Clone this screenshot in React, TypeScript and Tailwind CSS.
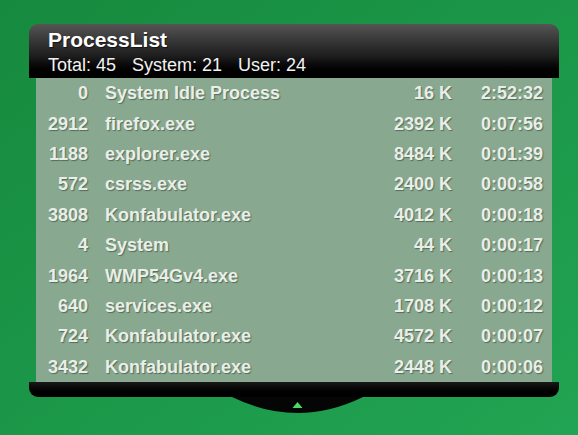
const processes = [
  { pid: "0", name: "System Idle Process", mem: "16 K", time: "2:52:32" },
  { pid: "2912", name: "firefox.exe", mem: "2392 K", time: "0:07:56" },
  { pid: "1188", name: "explorer.exe", mem: "8484 K", time: "0:01:39" },
  { pid: "572", name: "csrss.exe", mem: "2400 K", time: "0:00:58" },
  { pid: "3808", name: "Konfabulator.exe", mem: "4012 K", time: "0:00:18" },
  { pid: "4", name: "System", mem: "44 K", time: "0:00:17" },
  { pid: "1964", name: "WMP54Gv4.exe", mem: "3716 K", time: "0:00:13" },
  { pid: "640", name: "services.exe", mem: "1708 K", time: "0:00:12" },
  { pid: "724", name: "Konfabulator.exe", mem: "4572 K", time: "0:00:07" },
  { pid: "3432", name: "Konfabulator.exe", mem: "2448 K", time: "0:00:06" },
];

export default function App() {
  return (
    <div className="h-[435px] w-[578px] overflow-hidden bg-linear-to-br from-[#168a3e] to-[#21a453] pl-[29px] pt-[24px] font-['Liberation_Sans',Arial,sans-serif]">
      <div className="w-[530px]">
        {/* header */}
        <div className="h-[54px] rounded-t-[9px] bg-linear-to-b from-[#555555] via-[#1d1d1d] via-60% to-black pl-[19px] pt-[4px] text-white">
          <div className="text-[21px] font-bold leading-[24px] [text-shadow:1px_1px_1px_rgba(0,0,0,0.6)]">
            ProcessList
          </div>
          <div className="mt-[3px] flex text-[18px] leading-[20px] text-[#f2f2f2]">
            <span>Total: 45</span>
            <span className="ml-[16px]">System: 21</span>
            <span className="ml-[16px]">User: 24</span>
          </div>
        </div>

        {/* list */}
        <div className="mx-[7px] bg-[#88a98f] text-[18px] font-bold text-[#e9eee9] [text-shadow:1px_1px_1px_rgba(40,60,45,0.55)]">
          {processes.map((p, i) => (
            <div key={i} className="flex h-[30.4px] items-center pr-[9px] leading-[20px]">
              <span className="w-[52px] text-right">{p.pid}</span>
              <span className="ml-[17px] flex-1">{p.name}</span>
              <span className="text-right">{p.mem}</span>
              <span className="w-[91px] text-right">{p.time}</span>
            </div>
          ))}
        </div>

        {/* bottom bar */}
        <div className="h-[15px] rounded-b-[9px] bg-linear-to-b from-[#1a1a1a] to-black" />
        <svg className="ml-[203px] block" width="131" height="17" viewBox="0 0 131 17">
          <path d="M0 0 Q65.5 32 131 0 Z" fill="#050505" />
          <path d="M65.5 5 L70.5 11 L60.5 11 Z" fill="#4cd964" />
        </svg>
      </div>
    </div>
  );
}
